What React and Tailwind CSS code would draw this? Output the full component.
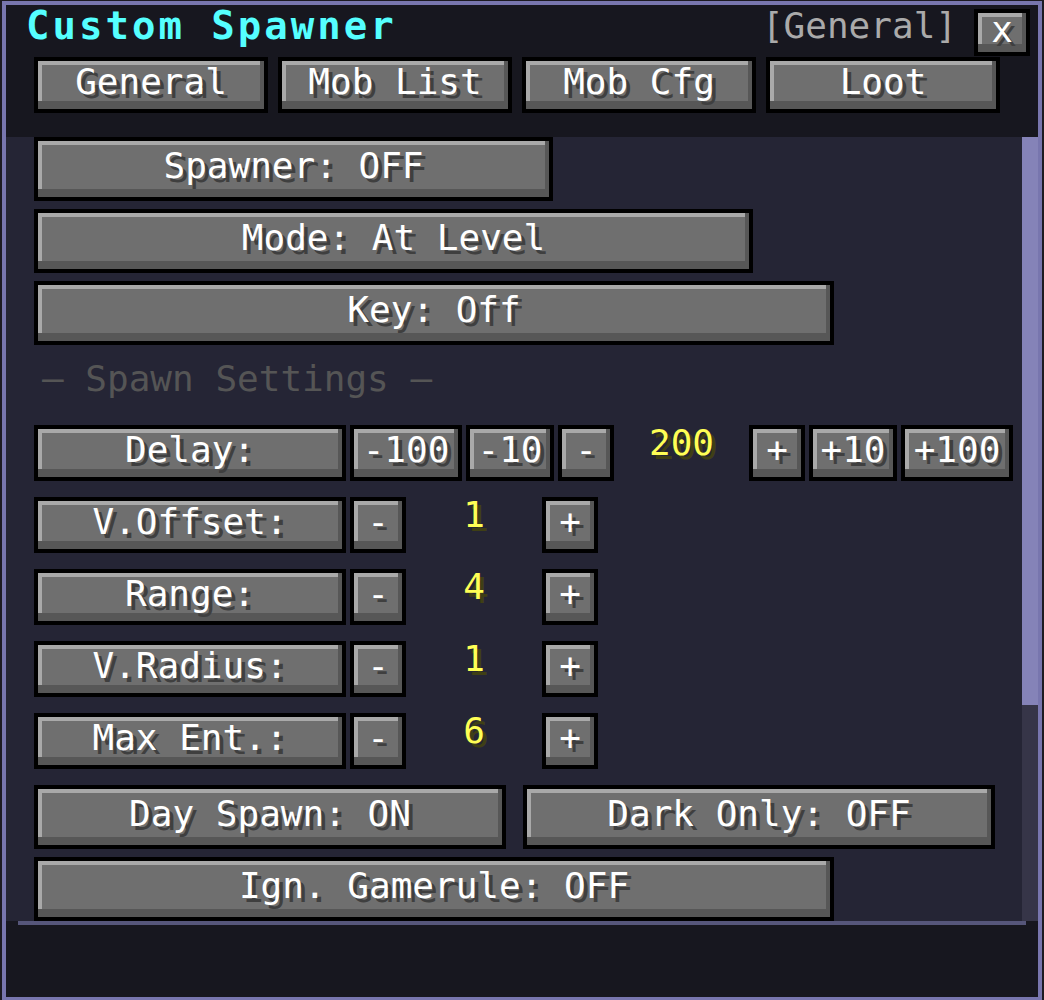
import React from 'react';

const mono = "font-['DejaVu_Sans_Mono',monospace]";

function McButton({ className, children }) {
  return (
    <div className={`shrink-0 border-4 border-black bg-black ${className}`}>
      <div
        className={`flex h-full w-full items-center justify-center whitespace-nowrap bg-[#6f6f6f] pb-[6px] text-[36px] leading-none text-white shadow-[inset_-4px_-8px_0_#575757,inset_4px_4px_0_#a9a9a9] [text-shadow:4px_4px_0_#3f3f3f] ${mono}`}
      >
        {children}
      </div>
    </div>
  );
}

function Value({ className, children }) {
  return (
    <div
      className={`shrink-0 text-center text-[36px] leading-none text-[#ffff55] [text-shadow:4px_4px_0_#3f3f15] ${mono} ${className}`}
    >
      {children}
    </div>
  );
}

function StepRow({ label, value }) {
  return (
    <div className="flex h-[56px] gap-[4px]">
      <McButton className="h-[56px] w-[312px]">{label}</McButton>
      <McButton className="h-[56px] w-[56px]">-</McButton>
      <Value className="w-[128px]">{value}</Value>
      <McButton className="h-[56px] w-[56px]">+</McButton>
    </div>
  );
}

export default function App() {
  const tabs = ['General', 'Mob List', 'Mob Cfg', 'Loot'];
  const steps = [
    { label: 'V.Offset:', value: '1' },
    { label: 'Range:', value: '4' },
    { label: 'V.Radius:', value: '1' },
    { label: 'Max Ent.:', value: '6' },
  ];

  return (
    <div className="h-[1000px] overflow-hidden bg-[#1d1b22] pl-[2px] pt-[1px]">
      <div className="flex h-[1000px] w-[1040px] flex-col border-4 border-[#7876ae] bg-[#17171f]">
        {/* header */}
        <div className="h-[132px] shrink-0">
          <div className="flex h-[52px] justify-between">
            <div
              className={`pl-[20px] pt-[1px] text-[39px] font-bold leading-none tracking-[3px] text-[#55ffff] ${mono}`}
            >
              Custom Spawner
            </div>
            <div className="flex items-start">
              <div className={`pt-[3px] text-[36px] leading-none text-[#aaaaaa] ${mono}`}>
                [General]
              </div>
              <McButton className="ml-[17px] mr-[8px] mt-[4px] h-[47px] w-[56px]">x</McButton>
            </div>
          </div>
          <div className="flex gap-[10px] pl-[28px]">
            {tabs.map((t) => (
              <McButton key={t} className="h-[56px] w-[234px]">
                {t}
              </McButton>
            ))}
          </div>
        </div>

        {/* scroll area */}
        <div className="flex h-[784px] shrink-0 bg-[#252535]">
          <div className="flex w-[1016px] flex-col overflow-hidden pl-[28px]">
            <McButton className="h-[64px] w-[519px]">Spawner: OFF</McButton>
            <McButton className="mt-[8px] h-[64px] w-[719px]">Mode: At Level</McButton>
            <McButton className="mt-[8px] h-[64px] w-[800px]">Key: Off</McButton>

            <div className={`mt-[16px] pl-[8px] text-[36px] leading-none text-[#555555] ${mono}`}>
              — Spawn Settings —
            </div>

            <div className="mt-[28px] flex flex-col gap-[16px]">
              <div className="flex h-[56px] gap-[4px]">
                <McButton className="h-[56px] w-[312px]">Delay:</McButton>
                <McButton className="h-[56px] w-[112px]">-100</McButton>
                <McButton className="h-[56px] w-[88px]">-10</McButton>
                <McButton className="h-[56px] w-[56px]">-</McButton>
                <Value className="w-[127px]">200</Value>
                <McButton className="h-[56px] w-[56px]">+</McButton>
                <McButton className="h-[56px] w-[88px]">+10</McButton>
                <McButton className="h-[56px] w-[112px]">+100</McButton>
              </div>
              {steps.map((s) => (
                <StepRow key={s.label} label={s.label} value={s.value} />
              ))}
            </div>

            <div className="mt-[16px] flex gap-[17px]">
              <McButton className="h-[64px] w-[472px]">Day Spawn: ON</McButton>
              <McButton className="h-[64px] w-[472px]">Dark Only: OFF</McButton>
            </div>
            <McButton className="mt-[8px] h-[64px] w-[800px]">Ign. Gamerule: OFF</McButton>
          </div>

          {/* scrollbar */}
          <div className="flex w-[16px] flex-col">
            <div className="h-[568px] bg-[#8583b8]" />
            <div className="flex-1 bg-[#363548]" />
          </div>
        </div>

        <div className="ml-[12px] h-[4px] w-[1008px] shrink-0 bg-[#56567a]" />
        <div className="flex-1" />
      </div>
    </div>
  );
}
